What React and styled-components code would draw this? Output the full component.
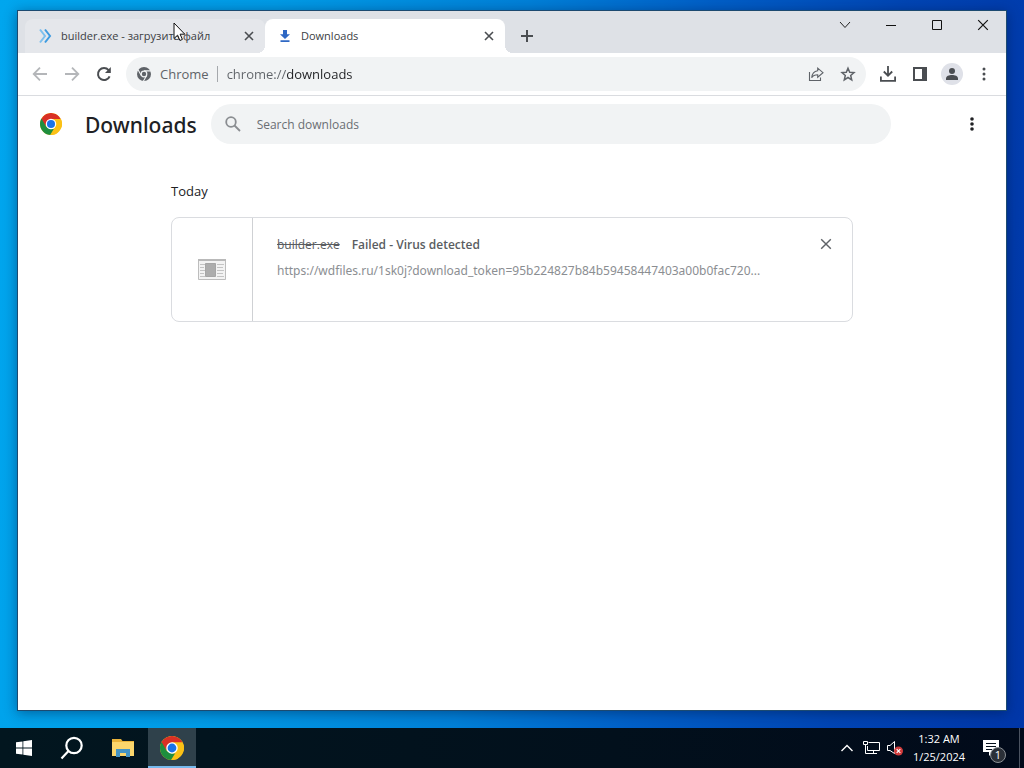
import React, { useId } from "react";
import styled, { createGlobalStyle } from "styled-components";

const GlobalStyle = createGlobalStyle`
  *, *::before, *::after { box-sizing: border-box; }
  body {
    margin: 0;
    font-family: "Open Sans", "Noto Sans", sans-serif;
    font-size: 12px;
    line-height: 16px;
    color: #202124;
  }
  button, input { font: inherit; color: inherit; }
  svg { display: block; flex: none; }
`;

const Screen = styled.div`
  position: relative;
  display: flex;
  flex-direction: column;
  height: 100vh;
  background: linear-gradient(96deg, #00a6ee 0%, #009be6 25%, #0080d8 48%, #0060c8 64%, #0045b4 82%, #0036a8 100%);
`;

const Desktop = styled.div`
  flex: 1;
  min-height: 0;
  display: flex;
  padding: 10px 17px 17px;
`;

const BrowserWindow = styled.div`
  flex: 1;
  min-width: 0;
  display: flex;
  flex-direction: column;
  background: #fff;
  border: 1px solid #1c4a70;
  box-shadow: 0 2px 12px rgba(0, 20, 60, 0.45);
`;

const PlainButton = styled.button`
  display: flex;
  align-items: center;
  justify-content: center;
  flex: none;
  padding: 0;
  border: 0;
  background: none;
  color: ${(p) => p.$color || "#4a4d51"};
`;

const TabStrip = styled.div`
  display: flex;
  align-items: flex-end;
  height: 42px;
  padding-left: 7px;
  background: #dee1e6;
`;

const Tabs = styled.div`
  display: flex;
  min-width: 0;
  font-size: 11px;
`;

const Tab = styled.div`
  position: relative;
  display: flex;
  align-items: center;
  gap: 8px;
  width: 240px;
  height: 34px;
  padding: 0 8px 0 12px;
  border-radius: 8px 8px 0 0;
  color: #3c4043;
  background: ${(p) => (p.$active ? "#fff" : "#e5e7eb")};

  &::before, &::after {
    content: "";
    display: ${(p) => (p.$active ? "block" : "none")};
    position: absolute;
    bottom: 0;
    width: 8px;
    height: 8px;
  }
  &::before { right: 100%; background: radial-gradient(circle at 0 0, transparent 8px, #fff 8px); }
  &::after { left: 100%; background: radial-gradient(circle at 100% 0, transparent 8px, #fff 8px); }
`;

const TabTitle = styled.span`
  flex: 1;
  min-width: 0;
  overflow: hidden;
  white-space: nowrap;
`;

const IconButton = styled(PlainButton)`
  width: ${(p) => p.$size || 32}px;
  height: ${(p) => p.$size || 32}px;
  border-radius: 50%;
`;

const NewTabButton = styled(IconButton)`
  margin: 0 0 3px 8px;
`;

const WindowControls = styled.div`
  display: flex;
  align-self: flex-start;
  margin-left: auto;
`;

const WindowButton = styled(PlainButton)`
  width: 46px;
  height: 28px;
`;

const Toolbar = styled.div`
  display: flex;
  align-items: center;
  height: 43px;
  padding: 0 6px;
  border-bottom: 1px solid #dadce0;
`;

const AddressBar = styled.div`
  flex: 1;
  min-width: 0;
  display: flex;
  align-items: center;
  height: 34px;
  margin: 0 6px;
  padding: 0 2px 0 10px;
  border-radius: 17px;
  background: #f1f3f4;
  font-size: 13px;
  color: #5f6368;
`;

const SchemeChip = styled.label`
  display: flex;
  align-items: center;
  gap: 8px;
  margin-right: 9px;
  padding-right: 8px;
  border-right: 1px solid #a5a8ac;
`;

const UrlInput = styled.input`
  flex: 1;
  min-width: 0;
  padding: 0;
  border: 0;
  outline: 0;
  color: transparent;
  background: linear-gradient(to right, #5f6368 60px, #202124 60px);
  background-clip: text;
  -webkit-background-clip: text;
`;

const Avatar = styled.span`
  display: grid;
  place-items: center;
  width: 22px;
  height: 22px;
  border-radius: 50%;
  background: #dfe1e8;
`;

const Page = styled.main`
  flex: 1;
  min-height: 0;
  overflow: auto;
`;

const PageHeader = styled.header`
  display: flex;
  align-items: center;
  height: 56px;
  padding: 0 18px 0 22px;
`;

const PageTitle = styled.h1`
  margin: 0 14px 0 23px;
  padding-top: 2px;
  font-family: "Noto Sans", "Open Sans", sans-serif;
  font-size: 21px;
  line-height: 28px;
  font-weight: 500;
`;

const SearchBox = styled.label`
  flex: 1;
  max-width: 680px;
  display: flex;
  align-items: center;
  gap: 14px;
  height: 40px;
  padding: 0 12px;
  border-radius: 20px;
  background: #f1f3f4;
`;

const SearchInput = styled.input`
  flex: 1;
  min-width: 0;
  padding: 2px 0 0;
  border: 0;
  outline: 0;
  background: none;
  &::placeholder { color: #6a6e73; opacity: 1; }
`;

const HeaderMenu = styled(IconButton)`
  margin-left: auto;
`;

const DownloadList = styled.section`
  max-width: 682px;
  margin: 0 auto;
  padding-top: 28px;
`;

const DateHeading = styled.h2`
  margin: 0 0 15px;
  font-size: 13px;
  line-height: 22px;
  font-weight: 400;
`;

const DownloadCard = styled.article`
  display: flex;
  height: 105px;
  border: 1px solid #dadce0;
  border-radius: 8px;
`;

const FileThumb = styled.div`
  display: grid;
  place-items: center;
  width: 81px;
  border-right: 1px solid #cfd1d4;
`;

const FileDetails = styled.div`
  flex: 1;
  min-width: 0;
  padding: 17px 0 0 24px;
`;

const FileLine = styled.div`
  display: flex;
  gap: 12px;
  line-height: 20px;
  color: #5a5d61;
`;

const FileName = styled.span`
  text-decoration: line-through;
`;

const FileState = styled.span`
  font-weight: 600;
`;

const FileUrl = styled.a`
  display: block;
  margin-top: 6px;
  font-family: "Noto Sans", "Open Sans", sans-serif;
  line-height: 20px;
  color: #8b8e92;
  text-decoration: none;
  white-space: nowrap;
  overflow: hidden;
  text-overflow: ellipsis;
`;

const RemoveButton = styled(IconButton)`
  margin: 10px 10px 0 18px;
`;

const Taskbar = styled.footer`
  display: flex;
  height: 40px;
  background: linear-gradient(to right, #02161f, #02101c 60%, #010a1a);
  color: #fff;
`;

const TaskButton = styled(PlainButton)`
  width: 48px;
  color: #fff;
  background: ${(p) => (p.$active ? "#2f414b" : "none")};
  border-bottom: 2px solid ${(p) => (p.$active ? "#76b9ed" : "transparent")};
  padding-top: 2px;
`;

const WideTaskButton = styled(TaskButton)`
  width: 52px;
  padding-left: 2px;
`;

const Tray = styled.div`
  display: flex;
  margin-left: auto;
`;

const TrayButton = styled(PlainButton)`
  width: 24px;
  color: #fff;
`;

const Clock = styled(PlainButton)`
  flex-direction: column;
  width: 64px;
  font-size: 11px;
  line-height: 18px;
  color: #fff;
`;

const NotificationButton = styled(PlainButton)`
  position: relative;
  width: 48px;
  padding-right: 8px;
  color: #fff;
`;

const Badge = styled.span`
  position: absolute;
  left: 19px;
  top: 19px;
  width: 16px;
  height: 16px;
  border: 1px solid #8c9196;
  border-radius: 50%;
  background: #2b3038;
  font-size: 11px;
  line-height: 14px;
  text-align: center;
`;

const ShowDesktop = styled(PlainButton)`
  width: 5px;
  border-left: 1px solid #4b5361;
`;

const Pointer = styled.svg`
  position: absolute;
  left: 173px;
  top: 22px;
`;

const CloseGlyph = ({ size = 10, width = 1.6 }) => (
  <svg width={size} height={size} viewBox="0 0 10 10" fill="none" stroke="currentColor" strokeWidth={width}>
    <path d="M1 1l8 8M9 1L1 9" />
  </svg>
);

const Dots = ({ r }) => (
  <svg width="16" height="16" viewBox="0 0 16 16" fill="currentColor">
    <circle cx="8" cy="3" r={r} />
    <circle cx="8" cy="8" r={r} />
    <circle cx="8" cy="13" r={r} />
  </svg>
);

const ChromeLogo = ({ size }) => {
  const id = useId();
  return (
    <svg width={size} height={size} viewBox="0 0 48 48">
      <clipPath id={id}><circle cx="24" cy="24" r="24" /></clipPath>
      <g clipPath={`url(#${id})`}>
        <rect width="48" height="48" fill="#fbc116" />
        <path d="M3.2 12A24 24 0 0 1 44.8 12L46 13H24L14.5 29.5L0 14Z" fill="#d93025" />
        <path d="M3.2 12L13.6 30L24 35H33.5L24 48H0V14Z" fill="#1e8e3e" />
        <path d="M24 13H48V30L34 48H22L33.5 29.5Z" fill="#fbc116" />
      </g>
      <circle cx="24" cy="24" r="11.5" fill="#fff" />
      <circle cx="24" cy="24" r="8.8" fill="#1a73e8" />
    </svg>
  );
};

const ChromeMono = () => (
  <svg width="16" height="16" viewBox="0 0 16 16" fill="none">
    <circle cx="8" cy="8" r="7" fill="#5f6368" />
    <circle cx="8" cy="8" r="3.4" fill="#f1f3f4" />
    <path d="M8 4.9H15M5.3 9.5L1.9 3.6M10.7 9.5L7.2 15.6" stroke="#f1f3f4" strokeWidth="1.1" />
    <circle cx="8" cy="8" r="2.2" fill="#5f6368" />
  </svg>
);

const SiteGlyph = () => (
  <svg width="16" height="16" viewBox="0 0 16 16" fill="none" strokeWidth="2">
    <path d="M3 1.5l5 6.5-5 6.5" stroke="#7cc0ee" />
    <path d="M8 1.5l5 6.5-5 6.5" stroke="#3d9be0" />
  </svg>
);

const DownloadGlyph = () => (
  <svg width="16" height="16" viewBox="0 0 16 16" fill="#2f68c4">
    <path d="M6 2h4v4.2h3L8 11 3 6.200h3zM3.500 12.300h9v1.700h-9z" />
  </svg>
);

export default function App() {
  return (
    <Screen>
      <GlobalStyle />
      <Desktop>
        <BrowserWindow>
          <TabStrip>
            <Tabs role="tablist">
              <Tab role="tab" aria-selected="false">
                <SiteGlyph />
                <TabTitle>builder.exe - загрузить файл</TabTitle>
                <IconButton $size={16} aria-label="Close tab"><CloseGlyph /></IconButton>
              </Tab>
              <Tab role="tab" aria-selected="true" $active>
                <DownloadGlyph />
                <TabTitle>Downloads</TabTitle>
                <IconButton $size={16} aria-label="Close tab"><CloseGlyph /></IconButton>
              </Tab>
            </Tabs>
            <NewTabButton $size={28} aria-label="New tab">
              <svg width="14" height="14" viewBox="0 0 14 14" stroke="currentColor" strokeWidth="2">
                <path d="M7 1v12M1 7h12" />
              </svg>
            </NewTabButton>
            <WindowControls>
              <WindowButton aria-label="Search tabs" $color="#222">
                <svg width="12" height="8" viewBox="0 0 12 8" fill="none" stroke="currentColor"><path d="M1 1l5 5.500 5-5.500" /></svg>
              </WindowButton>
              <WindowButton aria-label="Minimize" $color="#111">
                <svg width="10" height="10" viewBox="0 0 10 10" stroke="currentColor"><path d="M0 5.500h10" /></svg>
              </WindowButton>
              <WindowButton aria-label="Maximize" $color="#111">
                <svg width="10" height="10" viewBox="0 0 10 10" fill="none" stroke="currentColor"><path d="M.5.5h9v9h-9z" /></svg>
              </WindowButton>
              <WindowButton aria-label="Close window" $color="#111"><CloseGlyph size={12} width={1} /></WindowButton>
            </WindowControls>
          </TabStrip>

          <Toolbar>
            <IconButton aria-label="Back" $color="#b4b6b9">
              <svg width="16" height="16" viewBox="0 0 16 16" fill="none" stroke="currentColor" strokeWidth="1.8"><path d="M15 8H2.500M8 1.700L1.700 8 8 14.300" /></svg>
            </IconButton>
            <IconButton aria-label="Forward" $color="#b4b6b9">
              <svg width="16" height="16" viewBox="0 0 16 16" fill="none" stroke="currentColor" strokeWidth="1.8"><path d="M1 8h12.500M8 1.700L14.300 8 8 14.300" /></svg>
            </IconButton>
            <IconButton aria-label="Reload">
              <svg width="16" height="16" viewBox="0 0 16 16" fill="none" stroke="currentColor" strokeWidth="2">
                <path d="M13.600 10.300A6 6 0 1 1 12.600 4.200" />
                <path d="M14.800 1v6H9z" fill="currentColor" stroke="none" />
              </svg>
            </IconButton>
            <AddressBar>
              <SchemeChip htmlFor="address"><ChromeMono />Chrome</SchemeChip>
              <UrlInput id="address" defaultValue="chrome://downloads" />
              <IconButton aria-label="Share" $color="#5f6368">
                <svg width="16" height="16" viewBox="0 0 16 16" fill="none" stroke="currentColor" strokeWidth="1.1">
                  <path d="M1.500 6v8.500h11V11.500" />
                  <path d="M9.700 2.200L15 6.700l-5.300 4.500V8.700C7 8.700 5 9.500 3.700 11.700 4 8 6 5.200 9.700 4.700z" />
                </svg>
              </IconButton>
              <IconButton aria-label="Bookmark" $color="#5f6368">
                <svg width="16" height="16" viewBox="0 0 16 16" fill="none" stroke="currentColor" strokeWidth="1.500">
                  <path d="M8 2.200l1.700 4 4.300.4-3.300 2.900 1 4.300L8 11.500l-3.700 2.300 1-4.300L2 6.600l4.300-.4z" />
                </svg>
              </IconButton>
            </AddressBar>
            <IconButton aria-label="Downloads">
              <svg width="18" height="18" viewBox="0 0 18 18" fill="none" stroke="currentColor" strokeWidth="1.800">
                <path d="M9 1v9.500M4.800 6.500L9 10.700l4.200-4.200M1.900 11.500v4.400h14.200v-4.400" />
              </svg>
            </IconButton>
            <IconButton aria-label="Side panel">
              <svg width="16" height="16" viewBox="0 0 16 16" fill="currentColor">
                <path fillRule="evenodd" d="M1 1h14v14H1zM3 3v10h7V3z" />
              </svg>
            </IconButton>
            <IconButton aria-label="Profile">
              <Avatar>
                <svg width="14" height="14" viewBox="0 0 14 14" fill="currentColor">
                  <circle cx="7" cy="4" r="3" /><path d="M1 13v-1.500C1 9 4 8 7 8s6 1 6 3.500V13z" />
                </svg>
              </Avatar>
            </IconButton>
            <IconButton aria-label="Chrome menu"><Dots r={1.5} /></IconButton>
          </Toolbar>

          <Page>
            <PageHeader>
              <ChromeLogo size={22} />
              <PageTitle>Downloads</PageTitle>
              <SearchBox>
                <svg width="20" height="20" viewBox="0 0 20 20" fill="none" stroke="#8a8d91" strokeWidth="1.800">
                  <circle cx="8" cy="8" r="4.800" /><path d="M11.500 11.500l5.500 5.500" />
                </svg>
                <SearchInput type="text" placeholder="Search downloads" aria-label="Search downloads" />
              </SearchBox>
              <HeaderMenu aria-label="More actions" $color="#202124"><Dots r={1.8} /></HeaderMenu>
            </PageHeader>
            <DownloadList>
              <DateHeading>Today</DateHeading>
              <DownloadCard>
                <FileThumb>
                  <svg width="28" height="22" viewBox="0 0 28 22">
                    <path d="M.5.5h27v20H.5z" fill="#f3f3f3" stroke="#bdbdbd" />
                    <path d="M0 0h28v2H0z" fill="#b9b9b9" />
                    <path d="M2 5.500h5M2 8.500h4M2 11.500h5M2 14.500h4M2 17.500h5M19 5.500h7M19 8.500h6M19 11.500h7M19 14.500h6M19 17.500h7" stroke="#c4c4c4" />
                    <path d="M7.500 4.500h10v13h-10z" fill="#adadad" stroke="#a6a6a6" />
                  </svg>
                </FileThumb>
                <FileDetails>
                  <FileLine>
                    <FileName>builder.exe</FileName>
                    <FileState>Failed - Virus detected</FileState>
                  </FileLine>
                  <FileUrl href="https://wdfiles.ru/1sk0j">https://wdfiles.ru/1sk0j?download_token=95b224827b84b59458447403a00b0fac720...</FileUrl>
                </FileDetails>
                <RemoveButton aria-label="Remove from list" $color="#5f6368"><CloseGlyph size={12} width={1.200} /></RemoveButton>
              </DownloadCard>
            </DownloadList>
          </Page>
        </BrowserWindow>
      </Desktop>

      <Taskbar>
        <TaskButton aria-label="Start">
          <svg width="16" height="16" viewBox="0 0 16 16" fill="currentColor">
            <path d="M0 2.300L6.500 1.400V7.600H0zM7.300 1.300L16 0v7.600H7.300zM0 8.400h6.500v6.200L0 13.700zM7.300 8.400H16V16l-8.700-1.300z" />
          </svg>
        </TaskButton>
        <TaskButton aria-label="Search">
          <svg width="24" height="24" viewBox="0 0 24 24" fill="none" stroke="currentColor" strokeWidth="2.200">
            <circle cx="14" cy="9.500" r="7.700" /><path d="M8.500 15L1.500 22.500" />
          </svg>
        </TaskButton>
        <WideTaskButton aria-label="File Explorer">
          <svg width="22" height="20" viewBox="0 0 22 20">
            <path d="M0 1h9l1.500 2H22v15H0z" fill="#e9b33a" />
            <path d="M0 4h22v14H0z" fill="#fbd66c" />
            <path d="M4 19v-8h14v8h-4v-4H8v4z" fill="#4494c4" />
          </svg>
        </WideTaskButton>
        <TaskButton $active aria-label="Google Chrome"><ChromeLogo size={24} /></TaskButton>
        <Tray>
          <TrayButton aria-label="Show hidden icons">
            <svg width="12" height="8" viewBox="0 0 12 8" fill="none" stroke="currentColor" strokeWidth="1.400"><path d="M.5 7L6 1.500 11.500 7" /></svg>
          </TrayButton>
          <TrayButton aria-label="Network">
            <svg width="17" height="14" viewBox="0 0 17 14" fill="none" stroke="currentColor">
              <path d="M5.500 1.500h11v8h-12V5M10.500 9.500v3M6 12.500h8" /><path d="M.5.500h4v3h-4zM2.500 4v8.500H6" />
            </svg>
          </TrayButton>
          <TrayButton aria-label="Volume muted">
            <svg width="16" height="16" viewBox="0 0 16 16" fill="none">
              <path d="M.5 5.500h2.500L7.500 1.500v12L3 10.500H.5z" stroke="currentColor" />
              <circle cx="11.500" cy="11" r="4.500" fill="#d13c3c" />
              <path d="M9.700 9.200l3.600 3.600M13.300 9.200l-3.600 3.600" stroke="#fff" strokeWidth="1.200" />
            </svg>
          </TrayButton>
          <Clock><time>1:32 AM</time><time>1/25/2024</time></Clock>
          <NotificationButton aria-label="Notifications, 1 new">
            <svg width="18" height="18" viewBox="0 0 18 18">
              <path d="M1 1h16v12h-6l-4 4v-4H1z" fill="#fff" />
              <path d="M4 4.500h10M4 7.500h10M4 10.500h6" stroke="#05101c" />
            </svg>
            <Badge>1</Badge>
          </NotificationButton>
          <ShowDesktop aria-label="Show desktop" />
        </Tray>
      </Taskbar>

      <Pointer width="13" height="20" viewBox="0 0 13 20" aria-hidden="true">
        <path d="M1 1v15.500l3.600-3.400 2.300 5.400 2.500-1.100-2.300-5.200h4.700z" fill="#fff" stroke="#111" />
      </Pointer>
    </Screen>
  );
}
